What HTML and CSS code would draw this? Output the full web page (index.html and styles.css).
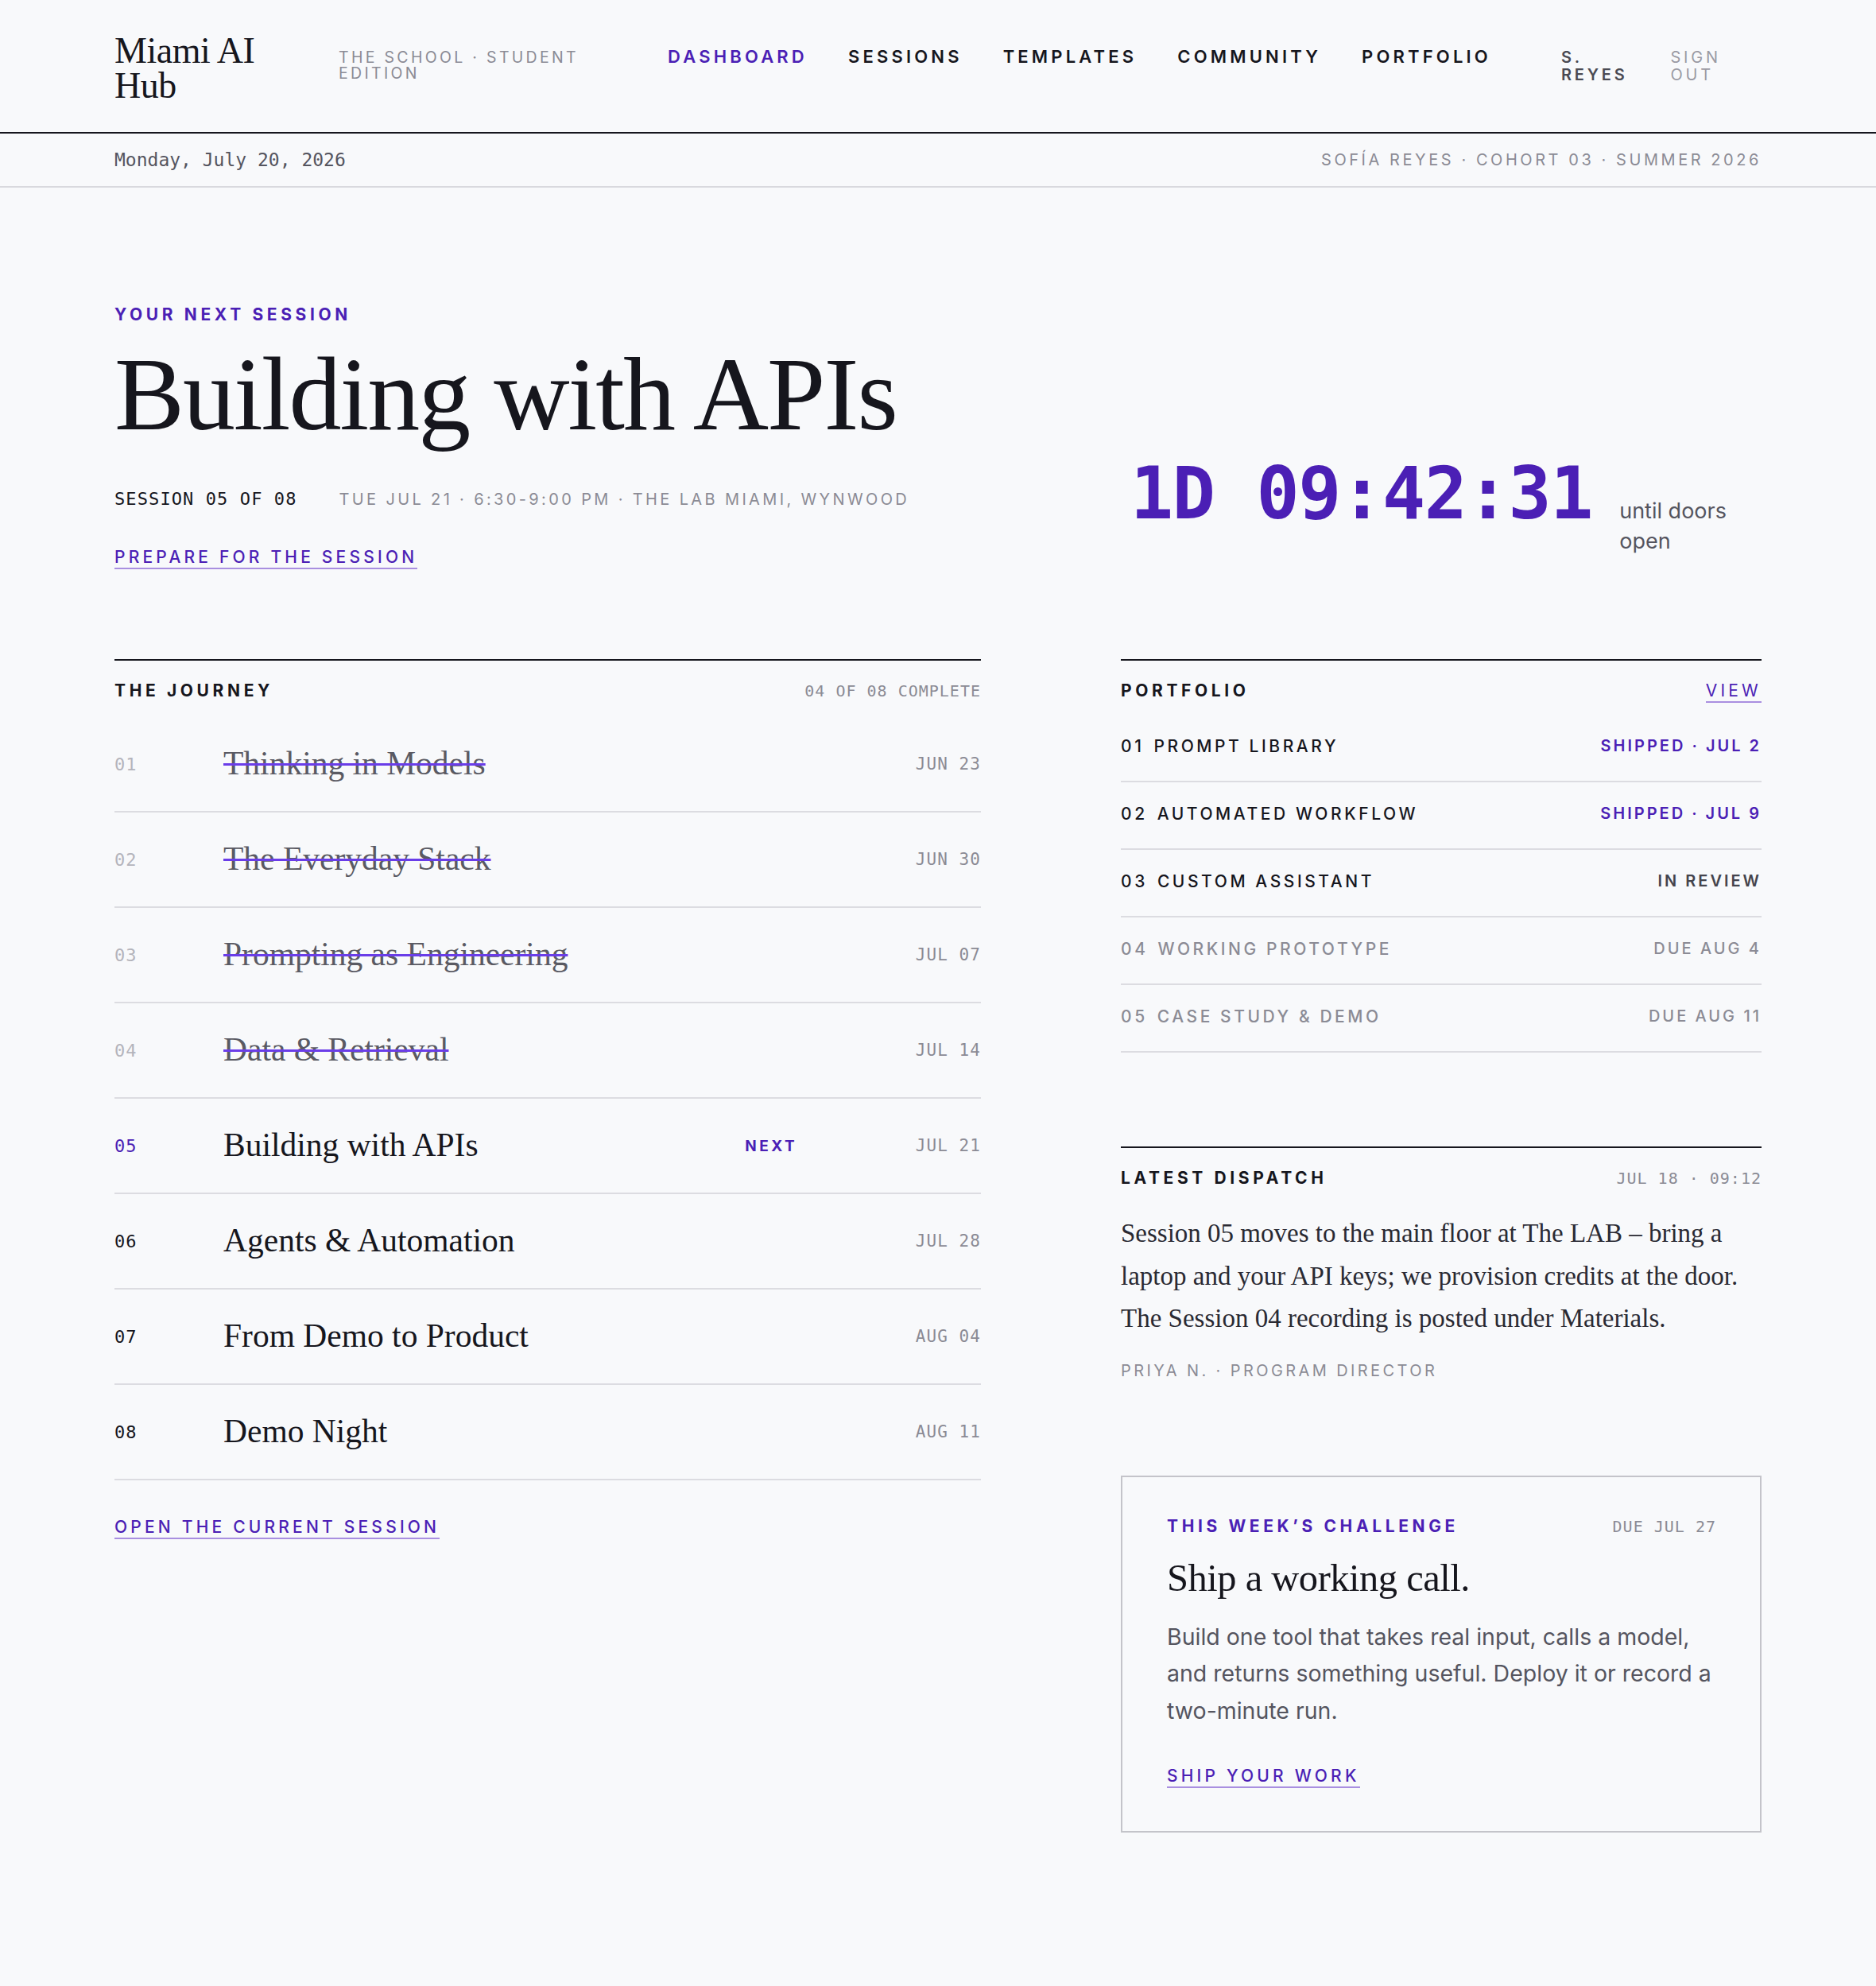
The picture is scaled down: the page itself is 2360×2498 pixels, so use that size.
FILE: index.html
```html
<!DOCTYPE html>
<html lang="en">
<head>
    <meta charset="UTF-8">
    <meta name="viewport" content="width=device-width, initial-scale=1.0">
    <title>Dashboard · Miami AI Hub</title>
    <link rel="stylesheet" href="styles.css">
</head>
<body>
    <header class="masthead">
        <div class="wrap masthead-inner">
            <a href="#" class="logo">Miami AI Hub</a>
            <div class="edition">The School · Student Edition</div>
            <nav class="main-nav">
                <a href="#" class="active">Dashboard</a>
                <a href="#">Sessions</a>
                <a href="#">Templates</a>
                <a href="#">Community</a>
                <a href="#">Portfolio</a>
            </nav>
            <div class="account">
                <span class="account-name">S. Reyes</span>
                <a href="#" class="account-out">Sign out</a>
            </div>
        </div>
    </header>

    <div class="datebar">
        <div class="wrap datebar-inner">
            <span class="today">Monday, July 20, 2026</span>
            <span class="cohort">Sofía Reyes · Cohort 03 · Summer 2026</span>
        </div>
    </div>

    <section class="wrap hero">
        <div class="hero-main">
            <div class="eyebrow">Your next session</div>
            <h1>Building with APIs</h1>
            <div class="hero-meta">
                <span class="hero-count">SESSION 05 OF 08</span>
                <span class="hero-where">Tue Jul 21 · 6:30-9:00 PM · The LAB Miami, Wynwood</span>
            </div>
            <a href="#" class="cta">Prepare for the session</a>
        </div>
        <div class="countdown">
            <span class="countdown-time" id="countdown">1D 09:42:31</span>
            <span class="countdown-label">until doors open</span>
        </div>
    </section>

    <main class="wrap board">
        <section class="journey">
            <div class="panel-head">
                <h2>The Journey</h2>
                <span class="panel-aside mono">04 OF 08 COMPLETE</span>
            </div>

            <div class="step done">
                <span class="step-num">01</span>
                <span class="step-title">Thinking in Models</span>
                <span class="step-tag"></span>
                <span class="step-date">JUN 23</span>
            </div>
            <div class="step done">
                <span class="step-num">02</span>
                <span class="step-title">The Everyday Stack</span>
                <span class="step-tag"></span>
                <span class="step-date">JUN 30</span>
            </div>
            <div class="step done">
                <span class="step-num">03</span>
                <span class="step-title">Prompting as Engineering</span>
                <span class="step-tag"></span>
                <span class="step-date">JUL 07</span>
            </div>
            <div class="step done">
                <span class="step-num">04</span>
                <span class="step-title">Data &amp; Retrieval</span>
                <span class="step-tag"></span>
                <span class="step-date">JUL 14</span>
            </div>
            <div class="step next">
                <span class="step-num">05</span>
                <span class="step-title">Building with APIs</span>
                <span class="step-tag">Next</span>
                <span class="step-date">JUL 21</span>
            </div>
            <div class="step">
                <span class="step-num">06</span>
                <span class="step-title">Agents &amp; Automation</span>
                <span class="step-tag"></span>
                <span class="step-date">JUL 28</span>
            </div>
            <div class="step">
                <span class="step-num">07</span>
                <span class="step-title">From Demo to Product</span>
                <span class="step-tag"></span>
                <span class="step-date">AUG 04</span>
            </div>
            <div class="step">
                <span class="step-num">08</span>
                <span class="step-title">Demo Night</span>
                <span class="step-tag"></span>
                <span class="step-date">AUG 11</span>
            </div>

            <a href="#" class="cta journey-cta">Open the current session</a>
        </section>

        <aside class="side">
            <section class="portfolio">
                <div class="panel-head">
                    <h2>Portfolio</h2>
                    <a href="#" class="cta cta-small">View</a>
                </div>
                <div class="piece">
                    <span><span class="piece-num">01</span>Prompt Library</span>
                    <span class="piece-status shipped">Shipped · Jul 2</span>
                </div>
                <div class="piece">
                    <span><span class="piece-num">02</span>Automated Workflow</span>
                    <span class="piece-status shipped">Shipped · Jul 9</span>
                </div>
                <div class="piece">
                    <span><span class="piece-num">03</span>Custom Assistant</span>
                    <span class="piece-status review">In review</span>
                </div>
                <div class="piece later">
                    <span><span class="piece-num">04</span>Working Prototype</span>
                    <span class="piece-status">Due Aug 4</span>
                </div>
                <div class="piece later">
                    <span><span class="piece-num">05</span>Case Study &amp; Demo</span>
                    <span class="piece-status">Due Aug 11</span>
                </div>
            </section>

            <section class="dispatch">
                <div class="panel-head">
                    <h2>Latest Dispatch</h2>
                    <span class="panel-aside mono">JUL 18 · 09:12</span>
                </div>
                <p class="dispatch-body">Session 05 moves to the main floor at The LAB – bring a laptop and your API keys; we provision credits at the door. The Session 04 recording is posted under Materials.</p>
                <div class="dispatch-by">Priya N. · Program Director</div>
            </section>

            <section class="challenge">
                <div class="challenge-head">
                    <span class="eyebrow">This week’s challenge</span>
                    <span class="mono challenge-due">DUE JUL 27</span>
                </div>
                <h3>Ship a working call.</h3>
                <p>Build one tool that takes real input, calls a model, and returns something useful. Deploy it or record a two-minute run.</p>
                <a href="#" class="cta">Ship your work</a>
            </section>
        </aside>
    </main>
</body>
</html>
```

FILE: styles.css
```css
* {
    margin: 0;
    padding: 0;
    box-sizing: border-box;
}

body {
    font-family: Inter, Roboto, 'Liberation Sans', sans-serif;
    background: #f8f9fb;
    color: #16161d;
    min-height: 100vh;
}

a {
    color: inherit;
    text-decoration: none;
}

.wrap {
    max-width: 2072px;
    margin: 0 auto;
}

.mono {
    font-family: 'DejaVu Sans Mono', 'Liberation Mono', monospace;
}

/* top bar */
.masthead {
    border-bottom: 2px solid #16161d;
}

.masthead-inner {
    display: flex;
    align-items: baseline;
    padding: 42px 0 36px;
}

.logo {
    font-family: 'Liberation Serif', serif;
    font-size: 46px;
    line-height: 44px;
    letter-spacing: -0.01em;
    width: 190px;
}

.edition {
    margin-left: 92px;
    width: 340px;
    font-size: 19.5px;
    line-height: 20px;
    letter-spacing: 0.17em;
    text-transform: uppercase;
    color: #8b8b95;
}

.main-nav {
    display: flex;
    gap: 51px;
    margin-left: 74px;
}

.main-nav a {
    font-size: 22px;
    font-weight: 600;
    letter-spacing: 0.19em;
    text-transform: uppercase;
}

.main-nav a.active {
    color: #4b1fb5;
}

.account {
    display: flex;
    gap: 54px;
    margin-left: 88px;
    font-size: 20px;
    line-height: 22px;
    letter-spacing: 0.19em;
    text-transform: uppercase;
}

.account span,
.account a {
    width: min-content;
}

.account-name {
    font-weight: 600;
    color: #4a4a53;
}

.account-out {
    color: #9a9aa3;
}

.datebar {
    border-bottom: 2px solid #d9d9de;
}

.datebar-inner {
    display: flex;
    justify-content: space-between;
    align-items: center;
    height: 66px;
}

.today {
    font-family: 'DejaVu Sans Mono', 'Liberation Mono', monospace;
    font-size: 23px;
    color: #55555f;
}

.cohort {
    font-size: 20px;
    letter-spacing: 0.178em;
    text-transform: uppercase;
    color: #8b8b95;
}

/* next session */
.hero {
    display: grid;
    grid-template-columns: 1090px 1fr;
    column-gap: 176px;
    align-items: end;
    padding-top: 148px;
}

.eyebrow {
    font-size: 21px;
    line-height: 24px;
    font-weight: 700;
    letter-spacing: 0.22em;
    text-transform: uppercase;
    color: #4b1fb5;
}

.hero h1 {
    font-family: 'Liberation Serif', serif;
    font-size: 132px;
    line-height: 139px;
    font-weight: 400;
    letter-spacing: -0.015em;
    margin-top: 18px;
}

.hero-meta {
    display: flex;
    align-items: baseline;
    gap: 53px;
    margin-top: 49px;
    line-height: 28px;
}

.hero-count {
    font-family: 'DejaVu Sans Mono', 'Liberation Mono', monospace;
    font-size: 22px;
    letter-spacing: 0.05em;
}

.hero-where {
    font-size: 20px;
    letter-spacing: 0.168em;
    text-transform: uppercase;
    color: #8b8b95;
}

.cta {
    display: inline-block;
    font-size: 21px;
    line-height: 24px;
    font-weight: 500;
    letter-spacing: 0.2em;
    text-transform: uppercase;
    color: #4b1fb5;
    padding-bottom: 1px;
    border-bottom: 2px solid #a98fe0;
}

.hero .cta {
    margin-top: 47px;
}

.countdown {
    display: flex;
    align-items: baseline;
    gap: 34px;
    margin-left: 12px;
    padding-bottom: 16px;
}

.countdown-time {
    font-family: 'DejaVu Sans Mono', 'Liberation Mono', monospace;
    font-size: 90px;
    line-height: 1;
    font-weight: 700;
    letter-spacing: -0.015em;
    color: #4b1fb5;
}

.countdown-label {
    width: 150px;
    font-size: 27px;
    line-height: 38px;
    color: #55555f;
}

/* journey + side column */
.board {
    display: grid;
    grid-template-columns: 1090px 1fr;
    column-gap: 176px;
    align-items: start;
    margin-top: 113px;
    padding-bottom: 190px;
}

.panel-head {
    display: flex;
    justify-content: space-between;
    align-items: baseline;
    border-top: 2px solid #16161d;
    padding: 26px 0 21px;
    line-height: 24px;
}

.panel-head h2 {
    font-size: 21px;
    font-weight: 700;
    letter-spacing: 0.22em;
    text-transform: uppercase;
}

.panel-aside {
    font-size: 20px;
    letter-spacing: 0.05em;
    color: #8b8b95;
}

.cta-small {
    font-size: 21px;
    font-weight: 400;
}

.step {
    display: grid;
    grid-template-columns: 137px 1fr auto 231px;
    align-items: center;
    height: 120px;
    border-bottom: 2px solid #dcdce1;
}

.step-num,
.step-date {
    font-family: 'DejaVu Sans Mono', 'Liberation Mono', monospace;
    font-size: 21px;
    letter-spacing: 0.05em;
}

.step-num {
    font-size: 22px;
}

.step-title {
    font-family: 'Liberation Serif', serif;
    font-size: 41.5px;
    line-height: 1.2;
}

.step-tag {
    font-size: 19px;
    font-weight: 700;
    letter-spacing: 0.18em;
    text-transform: uppercase;
    color: #4b1fb5;
}

.step-date {
    text-align: right;
    color: #8b8b95;
}

.step.done .step-num {
    color: #b4b4bc;
}

.step.done .step-title {
    color: #5a5a63;
    text-decoration: line-through;
    text-decoration-color: #6a3de8;
    text-decoration-thickness: 3px;
}

.step.next .step-num {
    color: #4b1fb5;
}

.journey-cta {
    margin-top: 47px;
}

.portfolio .panel-head {
    padding-bottom: 15px;
}

.piece {
    display: flex;
    justify-content: space-between;
    align-items: center;
    height: 85px;
    padding-bottom: 5px;
    border-bottom: 2px solid #dcdce1;
    font-size: 21px;
    font-weight: 500;
    letter-spacing: 0.17em;
    text-transform: uppercase;
}

.piece-num {
    margin-right: 12px;
}

.piece-status {
    font-size: 20px;
    letter-spacing: 0.15em;
    color: #8b8b95;
}

.piece-status.shipped {
    font-weight: 600;
    color: #4b1fb5;
}

.piece-status.review {
    font-weight: 600;
    color: #44444d;
}

.piece.later {
    color: #8b8b95;
}

.dispatch {
    margin-top: 118px;
}

.dispatch .panel-head {
    padding-bottom: 19px;
}

.dispatch-body {
    font-family: 'Liberation Serif', serif;
    font-size: 33px;
    line-height: 53.5px;
    color: #2a2a33;
    margin-top: 12px;
}

.dispatch-by {
    margin-top: 26px;
    font-size: 20px;
    line-height: 24px;
    letter-spacing: 0.17em;
    text-transform: uppercase;
    color: #8b8b95;
}

.challenge {
    margin-top: 120px;
    border: 2px solid #c4c4ca;
    padding: 50px 55px 54px 56px;
}

.challenge-head {
    display: flex;
    justify-content: space-between;
    align-items: baseline;
}

.challenge-due {
    font-size: 20px;
    letter-spacing: 0.05em;
    color: #8b8b95;
}

.challenge h3 {
    font-family: 'Liberation Serif', serif;
    font-size: 48.5px;
    line-height: 55px;
    font-weight: 400;
    letter-spacing: -0.01em;
    margin-top: 25px;
}

.challenge p {
    font-size: 28.5px;
    line-height: 46.5px;
    color: #55555f;
    margin-top: 24px;
}

.challenge .cta {
    margin-top: 47px;
}
```
